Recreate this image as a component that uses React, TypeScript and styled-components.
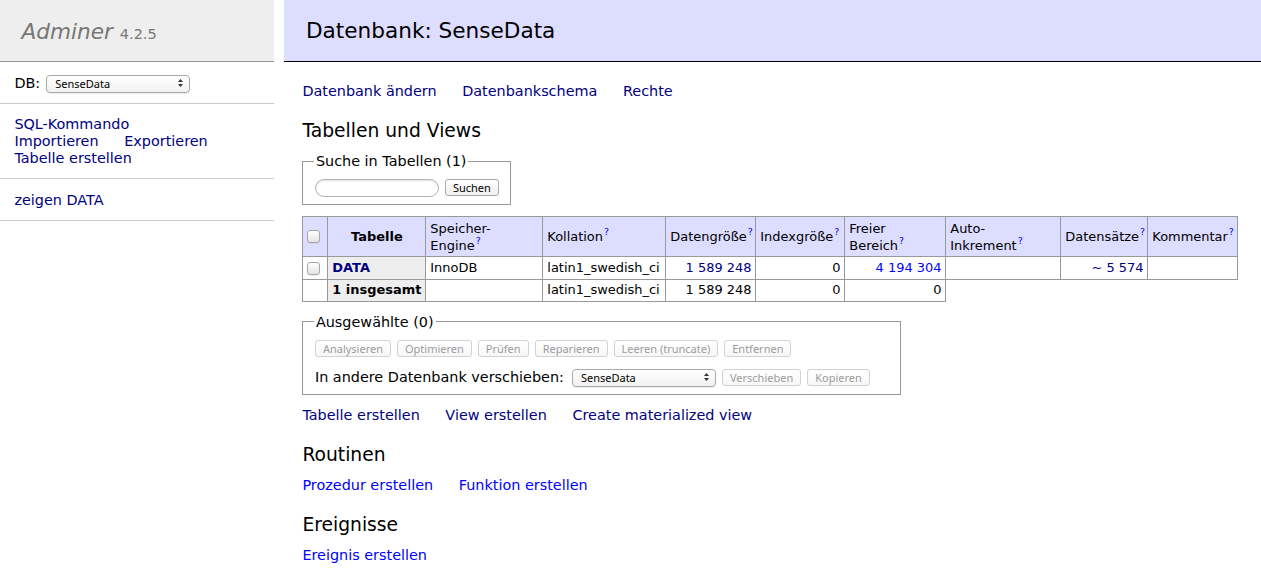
import React from 'react';
import styled, { createGlobalStyle } from 'styled-components';

const GlobalStyle = createGlobalStyle`
  html, body { margin: 0; padding: 0; background: #fff; }
  body {
    color: #000;
    font-family: "DejaVu Sans", Verdana, sans-serif;
    font-size: 14.4px;
    line-height: 18px;
  }
`;

const Page = styled.div`
  display: grid;
  grid-template-columns: 274px 1fr;
  min-height: 584px;
  overflow: hidden;
`;

const Sidebar = styled.nav`
  min-width: 0;
`;

const Logo = styled.h1`
  box-sizing: border-box;
  height: 62px;
  margin: 0;
  padding: 17.5px 21.6px;
  font-size: 21.6px;
  line-height: 27px;
  font-weight: normal;
  color: #777;
  background: #eee;
  border-bottom: 1px solid #999;
  white-space: nowrap;
`;

const LogoName = styled.a`
  color: #777;
  font-style: italic;
  text-decoration: none;
`;

const Version = styled.span`
  font-size: 67%;
  line-height: 1;
  color: #777;
`;

const MenuBlock = styled.div<{ $lh?: number }>`
  padding: 11.52px 14.4px;
  border-bottom: 1px solid #ccc;
  line-height: ${(p) => p.$lh ?? 18}px;
  white-space: nowrap;
`;

const DbRow = styled.div`
  display: flex;
  align-items: center;
  gap: 6px;
  height: 18px;
`;

const Link = styled.a<{ $tone?: 'navy' | 'blue'; $bold?: boolean }>`
  color: ${(p) => (p.$tone === 'blue' ? '#0000ff' : '#000080')};
  font-weight: ${(p) => (p.$bold ? 'bold' : 'normal')};
  text-decoration: none;
  white-space: nowrap;
`;

const LinkLine = styled.div<{ $gap?: number }>`
  display: flex;
  gap: ${(p) => p.$gap ?? 25.6}px;
`;

const SelectWrap = styled.span<{ $w: number }>`
  position: relative;
  display: inline-block;
  width: ${(p) => p.$w}px;
  height: 18px;
  flex: none;
`;

const NativeSelect = styled.select`
  appearance: none;
  -webkit-appearance: none;
  box-sizing: border-box;
  width: 100%;
  height: 100%;
  margin: 0;
  padding: 0 20px 0 8px;
  border: 1px solid #a9a9a9;
  border-radius: 4px;
  background: linear-gradient(#ffffff, #f1f1f1);
  box-shadow: 0 1px 1px rgba(0, 0, 0, 0.08);
  font: 11px/16px "Noto Sans", "DejaVu Sans", sans-serif;
  color: #000;
`;

const SelectArrows = styled.svg`
  position: absolute;
  right: 7px;
  top: 5px;
  pointer-events: none;
`;

const Select = ({ width }: { width: number }) => (
  <SelectWrap $w={width}>
    <NativeSelect defaultValue="SenseData">
      <option>SenseData</option>
    </NativeSelect>
    <SelectArrows width="5" height="8" viewBox="0 0 5 8">
      <path d="M0 3 L2.5 0 L5 3 Z M0 5 L2.5 8 L5 5 Z" fill="#333" />
    </SelectArrows>
  </SelectWrap>
);

const Main = styled.main`
  min-width: 0;
  padding: 0 20px 20px 28.4px;
`;

const Title = styled.h2`
  box-sizing: border-box;
  height: 62px;
  margin: 0 -20px 20px -18px;
  padding: 17px 21.6px;
  font-size: 21.6px;
  line-height: 27px;
  font-weight: normal;
  color: #000;
  background: #ddf;
  border-bottom: 1px solid #000;
  white-space: nowrap;
`;

const Links = styled.div<{ $top?: number }>`
  display: flex;
  gap: 25.6px;
  margin-top: ${(p) => p.$top ?? 11.52}px;
  line-height: 18px;
`;

const SectionTitle = styled.h3`
  margin: 18.72px 0 0;
  font-size: 18.72px;
  line-height: 23.4px;
  font-weight: normal;
`;

const Fieldset = styled.fieldset<{ $w?: number; $top?: number }>`
  box-sizing: border-box;
  width: ${(p) => (p.$w ? `${p.$w}px` : 'max-content')};
  margin: ${(p) => p.$top ?? 11.52}px 0 0;
  padding: 5px 11.52px 6px;
  border: 1px solid #999;
  min-inline-size: 0;
`;

const Legend = styled.legend`
  padding: 0 2px;
  margin-left: -1px;
  font-size: 14.4px;
  line-height: 18px;
`;

const Row = styled.div<{ $top?: number }>`
  display: flex;
  align-items: center;
  gap: 6px;
  height: 21px;
  margin-top: ${(p) => p.$top ?? 0}px;
  white-space: nowrap;
`;

const RowLabel = styled.span`
  margin-right: 2px;
`;

const Button = styled.button`
  box-sizing: border-box;
  height: 17px;
  margin: 0;
  padding: 0 7px;
  border: 1px solid #a8a8a8;
  border-radius: 3px;
  background: linear-gradient(#ffffff, #f0f0f0);
  font: 11px/15px "Noto Sans", "DejaVu Sans", sans-serif;
  color: #000;
  white-space: nowrap;

  &:disabled {
    border-color: #d2d2d2;
    color: #9c9c9c;
    background: linear-gradient(#ffffff, #f7f7f7);
  }
`;

const SearchInput = styled.input`
  box-sizing: border-box;
  width: 124px;
  height: 18px;
  margin: 0;
  padding: 0 8px;
  border: 1px solid #b4b4b4;
  border-radius: 9px;
  background: #fff;
  box-shadow: inset 0 1px 2px rgba(0, 0, 0, 0.12);
  font: 11px "Noto Sans", sans-serif;
`;

const Table = styled.table`
  margin: 11px 0 0;
  border-spacing: 0;
  border-top: 1px solid #999;
  border-left: 1px solid #999;
  font-size: 12.96px;
  line-height: 16.2px;
  table-layout: fixed;
  width: 936px;
`;

const cell = `
  box-sizing: border-box;
  border-right: 1px solid #999;
  border-bottom: 1px solid #999;
  padding: 2.6px 3.9px;
  vertical-align: middle;
  white-space: nowrap;
  overflow: hidden;
`;

const HeadCell = styled.td<{ $w: number }>`
  ${cell}
  width: ${(p) => p.$w}px;
  height: 40px;
  background: #ddf;
  text-align: left;
  line-height: 17px;
`;

const HeadTh = styled.th<{ $w: number }>`
  ${cell}
  width: ${(p) => p.$w}px;
  height: 40px;
  padding: 2.6px 6.5px;
  background: #ddf;
  text-align: center;
  font-weight: bold;
`;

const Cell = styled.td<{ $num?: boolean }>`
  ${cell}
  height: 22px;
  text-align: ${(p) => (p.$num ? 'right' : 'left')};
`;

const RowHead = styled.th`
  ${cell}
  height: 22px;
  background: #eee;
  text-align: left;
  font-weight: bold;
`;

const Help = styled.sup`
  font-size: 9.5px;
  line-height: 0;
  color: #0000ff;
  vertical-align: 6px;
  margin-left: 1px;
`;

const Check = styled.input.attrs({ type: 'checkbox' })`
  appearance: none;
  -webkit-appearance: none;
  display: block;
  box-sizing: border-box;
  width: 13px;
  height: 13px;
  margin: 0;
  border: 1px solid #a6a6a6;
  border-radius: 3px;
  background: linear-gradient(#ffffff, #e4e4e4);
  box-shadow: 0 1px 0 rgba(0, 0, 0, 0.05);
`;

const H = ({ children }: { children: React.ReactNode }) => (
  <>
    {children}
    <Help>?</Help>
  </>
);

export default function App() {
  return (
    <>
      <GlobalStyle />
      <Page>
        <Sidebar>
          <Logo>
            <LogoName>Adminer</LogoName> <Version>4.2.5</Version>
          </Logo>
          <MenuBlock>
            <DbRow>
              <span>DB:</span>
              <Select width={144} />
            </DbRow>
          </MenuBlock>
          <MenuBlock $lh={17}>
            <LinkLine>
              <Link>SQL-Kommando</Link>
            </LinkLine>
            <LinkLine>
              <Link>Importieren</Link>
              <Link>Exportieren</Link>
            </LinkLine>
            <LinkLine>
              <Link>Tabelle erstellen</Link>
            </LinkLine>
          </MenuBlock>
          <MenuBlock>
            <Link>zeigen DATA</Link>
          </MenuBlock>
        </Sidebar>

        <Main>
          <Title>Datenbank: SenseData</Title>
          <Links $top={0}>
            <Link>Datenbank ändern</Link>
            <Link>Datenbankschema</Link>
            <Link>Rechte</Link>
          </Links>

          <SectionTitle>Tabellen und Views</SectionTitle>
          <Fieldset $top={10}>
            <Legend>Suche in Tabellen (1)</Legend>
            <Row $top={2}>
              <SearchInput type="search" />
              <Button>Suchen</Button>
            </Row>
          </Fieldset>

          <Table>
            <thead>
              <tr>
                <HeadCell $w={25}>
                  <Check />
                </HeadCell>
                <HeadTh $w={98}>Tabelle</HeadTh>
                <HeadCell $w={117}>
                  Speicher-
                  <br />
                  <H>Engine</H>
                </HeadCell>
                <HeadCell $w={123}>
                  <H>Kollation</H>
                </HeadCell>
                <HeadCell $w={90}>
                  <H>Datengröße</H>
                </HeadCell>
                <HeadCell $w={89}>
                  <H>Indexgröße</H>
                </HeadCell>
                <HeadCell $w={101}>
                  Freier
                  <br />
                  <H>Bereich</H>
                </HeadCell>
                <HeadCell $w={115}>
                  Auto-
                  <br />
                  <H>Inkrement</H>
                </HeadCell>
                <HeadCell $w={87}>
                  <H>Datensätze</H>
                </HeadCell>
                <HeadCell $w={90}>
                  <H>Kommentar</H>
                </HeadCell>
              </tr>
            </thead>
            <tbody>
              <tr>
                <Cell>
                  <Check />
                </Cell>
                <RowHead>
                  <Link $bold>DATA</Link>
                </RowHead>
                <Cell>InnoDB</Cell>
                <Cell>latin1_swedish_ci</Cell>
                <Cell $num>
                  <Link>1 589 248</Link>
                </Cell>
                <Cell $num>0</Cell>
                <Cell $num>
                  <Link $tone="blue">4 194 304</Link>
                </Cell>
                <Cell $num></Cell>
                <Cell $num>
                  <Link>~ 5 574</Link>
                </Cell>
                <Cell></Cell>
              </tr>
              <tr>
                <Cell></Cell>
                <RowHead>1 insgesamt</RowHead>
                <Cell></Cell>
                <Cell>latin1_swedish_ci</Cell>
                <Cell $num>1 589 248</Cell>
                <Cell $num>0</Cell>
                <Cell $num>0</Cell>
              </tr>
            </tbody>
          </Table>

          <Fieldset $w={599} $top={10.5}>
            <Legend>Ausgewählte (0)</Legend>
            <Row $top={2}>
              <Button disabled>Analysieren</Button>
              <Button disabled>Optimieren</Button>
              <Button disabled>Prüfen</Button>
              <Button disabled>Reparieren</Button>
              <Button disabled>Leeren (truncate)</Button>
              <Button disabled>Entfernen</Button>
            </Row>
            <Row $top={8}>
              <RowLabel>In andere Datenbank verschieben:</RowLabel>
              <Select width={144} />
              <Button disabled>Verschieben</Button>
              <Button disabled>Kopieren</Button>
            </Row>
          </Fieldset>

          <Links>
            <Link>Tabelle erstellen</Link>
            <Link>View erstellen</Link>
            <Link>Create materialized view</Link>
          </Links>

          <SectionTitle>Routinen</SectionTitle>
          <Links $top={10}>
            <Link $tone="blue">Prozedur erstellen</Link>
            <Link $tone="blue">Funktion erstellen</Link>
          </Links>

          <SectionTitle>Ereignisse</SectionTitle>
          <Links $top={10}>
            <Link $tone="blue">Ereignis erstellen</Link>
          </Links>
        </Main>
      </Page>
    </>
  );
}
